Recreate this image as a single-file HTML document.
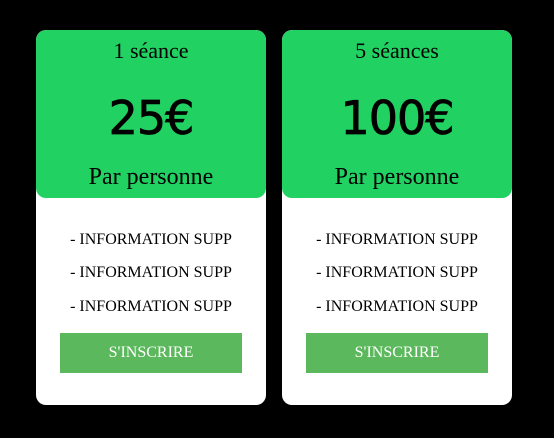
<!DOCTYPE html>
<html><head><style>
body{margin:0;background:#000;width:554px;height:438px;position:relative;font-family:"Liberation Serif",serif;}
.card{position:absolute;top:30px;width:230px;height:375px;background:#fff;border-radius:10px;overflow:hidden;}
.head{position:absolute;left:0;top:0;width:230px;height:168px;background:#21d161;border-radius:10px;}
.t{position:absolute;left:0;width:100%;text-align:center;color:#000;}
.t1{top:8px;font-size:22px;line-height:26px;}
.pr{top:60px;font-size:46px;line-height:56px;font-family:"DejaVu Sans",sans-serif;letter-spacing:-1px;-webkit-text-stroke:0.8px #000;}
.pp{top:133px;font-size:24px;line-height:28px;}
.i{font-size:16px;line-height:18px;}
.btn{position:absolute;left:24px;top:303px;width:182px;height:40px;background:#5cb85c;color:#fff;font-size:16px;line-height:40px;text-align:center;}
</style></head><body>
<div class="card" style="left:36px">
<div class="head"></div>
<div class="t t1">1 séance</div>
<div class="t pr">25€</div>
<div class="t pp">Par personne</div>
<div class="t i" style="top:201px">- INFORMATION SUPP</div>
<div class="t i" style="top:234px">- INFORMATION SUPP</div>
<div class="t i" style="top:268px">- INFORMATION SUPP</div>
<div class="btn">S'INSCRIRE</div>
</div>
<div class="card" style="left:282px">
<div class="head"></div>
<div class="t t1">5 séances</div>
<div class="t pr">100€</div>
<div class="t pp">Par personne</div>
<div class="t i" style="top:201px">- INFORMATION SUPP</div>
<div class="t i" style="top:234px">- INFORMATION SUPP</div>
<div class="t i" style="top:268px">- INFORMATION SUPP</div>
<div class="btn">S'INSCRIRE</div>
</div>
</body></html>
